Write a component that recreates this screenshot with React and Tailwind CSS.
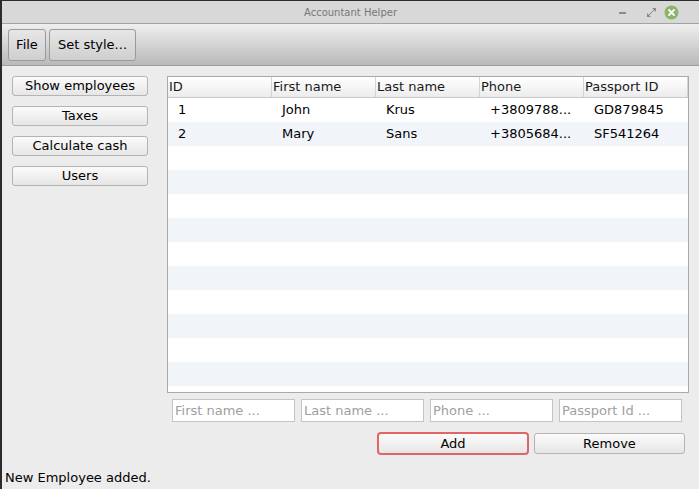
import React from "react";

const rows = [
  { id: "1", first: "John", last: "Krus", phone: "+3809788...", passport: "GD879845" },
  { id: "2", first: "Mary", last: "Sans", phone: "+3805684...", passport: "SF541264" },
];

const cols = ["ID", "First name", "Last name", "Phone", "Passport ID"];

function SideButton({ children }) {
  return (
    <button className="h-[20px] w-[136px] rounded-[3px] border border-[#b4b4b4] bg-gradient-to-b from-[#fbfbfb] to-[#e6e6e6] text-[13px] leading-[18px] text-black">
      {children}
    </button>
  );
}

function Field({ placeholder }) {
  return (
    <input
      placeholder={placeholder}
      className="h-[23px] w-[123px] border border-[#c4c4c4] bg-white px-[2px] text-[13px] outline-none placeholder:text-[#a0a0a0]"
    />
  );
}

export default function App() {
  const empty = Array.from({ length: 11 });
  return (
    <div
      className="flex h-[489px] w-[699px] overflow-hidden bg-[#2b2b2b] text-black"
      style={{ fontFamily: '"DejaVu Sans", sans-serif' }}
    >
      <div className="ml-[2px] mt-[1px] flex flex-1 flex-col bg-[#ececec]">
        {/* title bar */}
        <div className="relative flex h-[23px] items-center justify-center border-b border-[#a3a3a3] bg-[#d8d8d8]">
          <span className="text-[10px] text-[#777777]">Accountant Helper</span>
          <div className="absolute right-[20px] top-[4px] flex items-center">
            <div className="h-[2px] w-[7px] bg-[#8a8a8a]" />
            <svg width="9" height="9" viewBox="0 0 9 9" className="ml-[21px]">
              <path d="M5 0h4v4z M0 5v4h4z" fill="#8a8a8a" />
              <path d="M2 7l5-5" stroke="#8a8a8a" strokeWidth="1" />
            </svg>
            <svg width="15" height="15" viewBox="0 0 15 15" className="ml-[8px]">
              <circle cx="7.5" cy="7.5" r="7" fill="#8cb369" />
              <path d="M5 5l5 5M10 5l-5 5" stroke="#fff" strokeWidth="1.8" strokeLinecap="round" />
            </svg>
          </div>
        </div>
        {/* toolbar */}
        <div className="flex h-[42px] items-center gap-[3px] border-b border-[#9e9e9e] bg-gradient-to-b from-[#efefef] to-[#b9b9b9] pl-[6px]">
          <button className="h-[32px] w-[38px] rounded-[3px] border border-[#9a9a9a] bg-gradient-to-b from-[#e6e6e6] to-[#cfcfcf] text-[13px]">
            File
          </button>
          <button className="h-[32px] w-[87px] rounded-[3px] border border-[#9a9a9a] bg-gradient-to-b from-[#e6e6e6] to-[#cfcfcf] text-[13px]">
            Set style...
          </button>
        </div>
        {/* body */}
        <div className="flex flex-1 flex-col">
          <div className="flex">
            <div className="flex w-[165px] flex-col gap-[10px] pl-[10px] pt-[10px]">
              <SideButton>Show employees</SideButton>
              <SideButton>Taxes</SideButton>
              <SideButton>Calculate cash</SideButton>
              <SideButton>Users</SideButton>
            </div>
            <div className="flex flex-col">
              <div className="mt-[10px] h-[317px] w-[522px] overflow-hidden border border-[#a9a9a9] bg-white">
                <div className="flex h-[21px] border-b border-[#c8c8c8] bg-gradient-to-b from-[#ffffff] to-[#ececec] text-[13px] leading-[20px] text-[#1a1a1a]">
                  {cols.map((c) => (
                    <div key={c} className="w-[104px] border-r border-[#d4d4d4] pl-[1px]">
                      {c}
                    </div>
                  ))}
                  <div className="flex-1" />
                </div>
                {rows.map((r, i) => (
                  <div
                    key={r.id}
                    className={`flex h-[24px] items-center text-[13px] ${i % 2 ? "bg-[#f1f5fa]" : "bg-white"}`}
                  >
                    <div className="w-[104px] pl-[10px]">{r.id}</div>
                    <div className="w-[104px] pl-[10px]">{r.first}</div>
                    <div className="w-[104px] pl-[10px]">{r.last}</div>
                    <div className="w-[104px] pl-[10px]">{r.phone}</div>
                    <div className="w-[104px] pl-[10px]">{r.passport}</div>
                  </div>
                ))}
                {empty.map((_, i) => (
                  <div key={i} className={`h-[24px] ${i % 2 ? "bg-[#f1f5fa]" : "bg-white"}`} />
                ))}
              </div>
              <div className="mt-[6px] flex gap-[6px] pl-[5px]">
                <Field placeholder="First name ..." />
                <Field placeholder="Last name ..." />
                <Field placeholder="Phone ..." />
                <Field placeholder="Passport Id ..." />
              </div>
              <div className="mt-[10px] flex justify-end gap-[5px] pr-[4px]">
                <button className="h-[23px] w-[152px] rounded-[4px] border-2 border-[#e06666] bg-gradient-to-b from-[#fbfbfb] to-[#e6e6e6] text-[13px]">
                  Add
                </button>
                <button className="h-[21px] w-[151px] self-center rounded-[3px] border border-[#b4b4b4] bg-gradient-to-b from-[#fbfbfb] to-[#e6e6e6] text-[13px]">
                  Remove
                </button>
              </div>
            </div>
          </div>
          <div className="mt-auto pb-[2px] pl-[3px] text-[13px]">New Employee added.</div>
        </div>
      </div>
    </div>
  );
}
